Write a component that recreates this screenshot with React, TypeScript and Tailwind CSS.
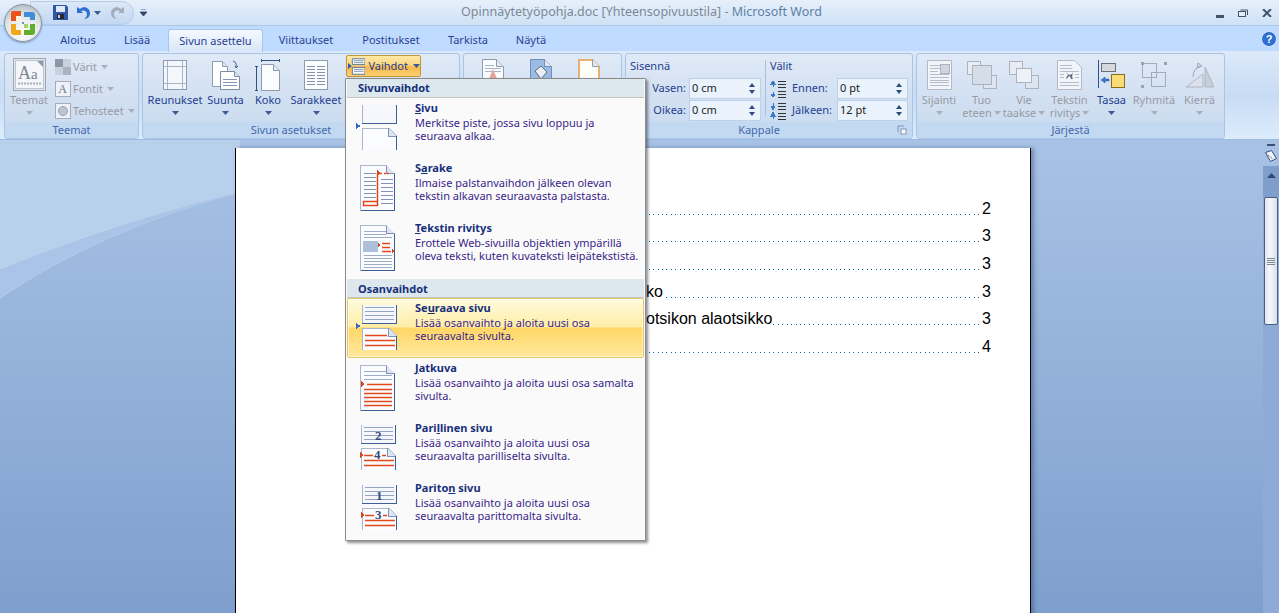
import type { ReactNode } from "react";

const tabs = [
  { label: "Aloitus", w: "w-[64px]" },
  { label: "Lisää", w: "w-[54px]" },
];
const tabsRight = [
  { label: "Viittaukset", w: "w-[86px]" },
  { label: "Postitukset", w: "w-[84px]" },
  { label: "Tarkista", w: "w-[70px]" },
  { label: "Näytä", w: "w-[56px]" },
];

const tocRows = [
  { text: "", page: "2" },
  { text: "", page: "3" },
  { text: "", page: "3" },
  { text: "ko", page: "3" },
  { text: "otsikon alaotsikko", page: "3" },
  { text: "", page: "4" },
];

function DownArrow({ off }: { off?: boolean }) {
  return (
    <svg width="7" height="4" viewBox="0 0 7 4" className="shrink-0">
      <path d="M0 0h7L3.5 4z" fill={off ? "#a9afb9" : "#3a5a92"} />
    </svg>
  );
}

function Group({ w, label, pad, children, launcher }: { w: string; label?: string; pad?: boolean; children: ReactNode; launcher?: boolean }) {
  return (
    <div className={`${w} h-[86px] flex flex-col rounded-[3px] border border-[#a9c5e6] overflow-hidden bg-gradient-to-b from-[#e0eaf7] via-[#d2e0f2] to-[#c9daef]`}>
      <div className="flex-1 flex min-h-0">{children}</div>
      <div className={`relative h-[16px] bg-[#c3d9f2] text-center text-[11px] leading-[15px] text-[#4668ad] ${pad ? "pr-[20px]" : ""}`}>
        {label}
        {launcher && (
          <svg width="10" height="10" viewBox="0 0 10 10" className="absolute right-[5px] top-[3px]">
            <path d="M1 1h6M1 1v6" stroke="#7f95b5" fill="none" />
            <rect x="4" y="4" width="5" height="5" fill="#fff" stroke="#7f95b5" />
          </svg>
        )}
      </div>
    </div>
  );
}

function BigBtn({ w, lines, icon, off, inlineArrow }: { w: string; lines: string[]; icon: ReactNode; off?: boolean; inlineArrow?: boolean }) {
  return (
    <div className={`${w} pt-[4px] flex flex-col items-center text-[11px] leading-[13px] ${off ? "text-[#989aa3]" : "text-[#24408f]"}`}>
      <div className="h-[33px] flex items-center justify-center">{icon}</div>
      <div className="mt-[2px] whitespace-nowrap">{lines[0]}</div>
      {inlineArrow ? (
        <div className="whitespace-nowrap flex items-center gap-[2px]">
          {lines[1]}
          <DownArrow off={off} />
        </div>
      ) : (
        <div className="h-[13px] flex items-center">
          <DownArrow off={off} />
        </div>
      )}
    </div>
  );
}

function SmallBtn({ icon, label }: { icon: ReactNode; label: string }) {
  return (
    <div className="h-[22px] flex items-center text-[11px] text-[#989aa3]">
      <div className="w-[19px] flex justify-center">{icon}</div>
      <span className="ml-[1px] whitespace-nowrap">{label}</span>
      <span className="ml-[4px]">
        <DownArrow off />
      </span>
    </div>
  );
}

function Spin({ value, w }: { value: string; w: string }) {
  return (
    <div className={`${w} h-[21px] bg-[#eaf2fc] border border-[#bcd0e8] flex items-center justify-between pl-[2px] pr-[5px] text-[11px] text-[#222]`}>
      <span>{value}</span>
      <span className="flex flex-col gap-[3px]">
        <svg width="6" height="4" viewBox="0 0 6 4"><path d="M0 4h6L3 0z" fill="#2c4a7c" /></svg>
        <svg width="6" height="4" viewBox="0 0 6 4"><path d="M0 0h6L3 4z" fill="#2c4a7c" /></svg>
      </span>
    </div>
  );
}

function SpaceIcon({ down }: { down?: boolean }) {
  return (
    <svg width="17" height="18" viewBox="0 0 17 18" shapeRendering="crispEdges">
      <path d="M8 1h8M8 4h8M8 7h8" stroke="#333" strokeWidth="1" />
      <path d="M8 11h8M8 14h8M8 17h8" stroke="#333" strokeWidth="1" />
      {down ? (
        <path d="M3 1v4M1 4h4L3 8zM3 17v-4M1 14h4L3 10z" fill="#3c78c8" stroke="#3c78c8" />
      ) : (
        <path d="M3 7V4M1 4h4L3 1zM3 12v3M1 14h4L3 17z" fill="#3c78c8" stroke="#3c78c8" />
      )}
    </svg>
  );
}

/* ribbon icons */
function TeematIcon() {
  return (
    <svg width="33" height="33" viewBox="0 0 33 33">
      <rect x="0.5" y="0.5" width="32" height="32" fill="#dfe6f0" stroke="#a4a8ae" />
      <rect x="2.5" y="2.5" width="28" height="28" fill="#f4f6fa" stroke="#bfc5cf" />
      <path d="M24 3h6v6z" fill="#8f98a8" />
      <text x="5" y="21" fontSize="18" fontFamily="Liberation Serif" fill="#7f8794">A</text>
      <text x="18" y="21" fontSize="15" fontFamily="Liberation Serif" fill="#7f8794">a</text>
      <path d="M5 25.500h23" stroke="#a9afba" strokeWidth="2" strokeDasharray="2 1" />
    </svg>
  );
}

function ReunuksetIcon() {
  return (
    <svg width="26" height="32" viewBox="0 0 26 32">
      <rect x="1.5" y="1.5" width="23" height="29" fill="#f3f6fb" stroke="#8e9cb2" />
      <path d="M5.5 2v28M20.5 2v28M2 7.5h22M2 24.5h22" stroke="#a8b4c6" />
    </svg>
  );
}

function SuuntaIcon() {
  return (
    <svg width="30" height="32" viewBox="0 0 30 32">
      <path d="M1.5 2.5h10l5 5v20h-15z" fill="#fff" stroke="#8e9cb2" />
      <path d="M11.5 2.5v5h5" fill="#dfe6f0" stroke="#8e9cb2" />
      <path d="M9.5 12.5h14l5 5v13h-19z" fill="#fff" stroke="#7d8ca5" />
      <path d="M23.5 12.5v5h5" fill="#dfe6f0" stroke="#7d8ca5" />
      <path d="M12 20.500h14M12 23.500h14M12 26.500h14" stroke="#8597b5" />
      <path d="M22 2q4 1 3 6M24 7l1 2 2-2" stroke="#3a5a92" fill="none" />
    </svg>
  );
}

function KokoIcon() {
  return (
    <svg width="26" height="32" viewBox="0 0 26 32">
      <path d="M6 1.500h19M6.500 0v3M24.500 0v3" stroke="#35507f" />
      <path d="M1.500 7v25M0 7.500h3M0 31.500h3" stroke="#35507f" />
      <path d="M6.5 5.5h12l6 6v20h-18z" fill="#fbfcfe" stroke="#8e9cb2" />
      <path d="M18.5 5.5v6h6" fill="#dfe6f0" stroke="#8e9cb2" />
    </svg>
  );
}

function SarakkeetIcon() {
  return (
    <svg width="26" height="32" viewBox="0 0 26 32">
      <rect x="1.5" y="1.5" width="23" height="29" fill="#fbfcfe" stroke="#8e9cb2" />
      <path d="M4 7.500h8M14 7.500h8M4 10.500h8M14 10.500h8M4 13.500h8M14 13.500h8M4 16.500h8M14 16.500h8M4 19.500h8M14 19.500h8M4 22.500h8M14 22.500h8M4 25.500h8M14 25.500h8" stroke="#8493ab" />
    </svg>
  );
}

function VaihdotIcon() {
  return (
    <svg width="18" height="17" viewBox="0 0 18 17">
      <path d="M4.5 0.5h13v6h-13z" fill="#fff" stroke="#5f7697" />
      <path d="M4.5 9.5h13v7h-13z" fill="#fff" stroke="#5f7697" />
      <path d="M6 2.500h10M6 4.500h10M6 11.500h10M6 13.500h10" stroke="#7c90ad" />
      <path d="M0 5l4 3-4 3z" fill="#2e5fb5" />
    </svg>
  );
}

function SquaresIcon({ back }: { back?: boolean }) {
  return (
    <svg width="32" height="30" viewBox="0 0 32 30">
      <rect x="1.5" y="1.5" width="13" height="13" fill="#e9edf3" stroke="#aab3c0" />
      <rect x="17.5" y="15.5" width="13" height="13" fill="#dfe5ee" stroke="#aab3c0" />
      {back ? (
        <rect x="8.5" y="8.5" width="15" height="14" fill="#eef1f6" stroke="#aab3c0" />
      ) : (
        <rect x="6.5" y="5.5" width="19" height="19" fill="#d5dde9" stroke="#aab3c0" />
      )}
    </svg>
  );
}

function DisabledPage({ kind }: { kind: "pic" | "dog" }) {
  return (
    <svg width="25" height="30" viewBox="0 0 25 30">
      <path d={kind === "pic" ? "M.5.5h24v29H.5z" : "M.5.5h17l7 7v22H.5z"} fill="#f1f4f8" stroke="#b3bac5" />
      <path d="M3 5.500h12M3 8.500h12M3 22.500h19M3 25.500h19" stroke="#b7bdc8" />
      {kind === "pic" ? (
        <>
          <rect x="13.5" y="4.500" width="9" height="9" fill="#cfd6e1" stroke="#aab3c0" />
          <path d="M3 11.500h8M3 14.500h19M3 17.500h19M3 20.500h19" stroke="#b7bdc8" />
        </>
      ) : (
        <>
          <path d="M3 11.500h19M3 14.500h4M18 14.500h4M3 17.500h4M18 17.500h4" stroke="#b7bdc8" />
          <path d="M9 12l3 3 3-1 1-2-1 5 1 2h-2l-1-3-2 1-1 2-1-1 2-3z" fill="#5f6a7b" />
        </>
      )}
    </svg>
  );
}

function TasaaIcon() {
  return (
    <svg width="28" height="30" viewBox="0 0 28 30">
      <path d="M0.5 0v28" stroke="#2b4f96" />
      <rect x="3.5" y="3.5" width="14" height="8" fill="#d5d9df" stroke="#6f6f6f" />
      <rect x="13.5" y="14.5" width="13" height="13" fill="#f9dc73" stroke="#8a6d1c" />
      <path d="M3 20l4-3v2h4v2H7v2z" fill="#3a78d0" stroke="#2b4f96" strokeWidth="0.5" />
    </svg>
  );
}

function RyhmitaIcon() {
  return (
    <svg width="26" height="26" viewBox="0 0 26 26">
      <rect x="1.5" y="1.5" width="14" height="14" fill="none" stroke="#a2abb8" />
      <rect x="10.5" y="10.5" width="14" height="14" fill="none" stroke="#a2abb8" />
      <path d="M0 0h3v3H0zM23 0h3v3h-3zM0 23h3v3H0z" fill="#98a2b0" />
    </svg>
  );
}

function KierraIcon() {
  return (
    <svg width="30" height="28" viewBox="0 0 30 28">
      <path d="M1 26l17-13v13z" fill="#dbe1ea" stroke="#aeb6c2" />
      <path d="M20 26V6l9 20z" fill="#c6ced9" stroke="#aeb6c2" />
      <path d="M8 16q0-8 7-11M13 2l4 3-5 2z" fill="none" stroke="#9aa4b2" />
    </svg>
  );
}

/* menu icons, 44 x 56, drawn so that x=0 is the small blue marker */
function Marker() {
  return <path d="M0 25l5 3-5 3z" fill="#3b66c8" />;
}

// red lines stay slightly wider than a pixel so the colour still reads at this size
function RedLines({ d }: { d: string }) {
  return <path d={d} stroke="#e2481a" strokeWidth="1.5" fill="none" shapeRendering="geometricPrecision" />;
}

function TopPage({ x = 6, lined, n }: { x?: number; lined?: boolean; n?: string }) {
  return (
    <g>
      <path d={`M${x}.5 7v18h34V7`} fill="#f5f7fd" stroke="#3d5f95" />
      <path d={`M${x}.5 7v18`} stroke="#aab6c9" />
      {lined && <path d={`M${x + 3} 9h29M${x + 3} 13h29M${x + 3} 17h29M${x + 3} 21h29`} stroke="#93a4c0" />}
      {n && (
        <text x={x + 14} y="22" fontSize="13" fontWeight="bold" fontFamily="Liberation Serif" fill="#34497a">{n}</text>
      )}
    </g>
  );
}

function BottomPage({ x = 6, red, n }: { x?: number; red?: boolean; n?: string }) {
  return (
    <g>
      <path d={`M${x}.5 52V30h26l8 8v14`} fill="#fbfcff" stroke="#aab6c9" />
      <path d={`M${x + 26}.5 30v8h8`} fill="#dfe5f0" stroke="#7e93b5" />
      <path d={`M${x + 34}.5 38v14`} stroke="#3d5f95" />
      {red && <RedLines d={`M${x + 3} 37.500h22M${x + 3} 42.500h30M${x + 3} 47.500h30`} />}
      {n && <path d={`M${x - 1} 34l4 3-4 3z`} fill="#d9481c" />}
      {n && <rect x={x + 12} y="31" width="9" height="10" fill="#fbfcff" />}
      {n && (
        <text x={x + 13} y="41" fontSize="13" fontWeight="bold" fontFamily="Liberation Serif" fill="#34497a">{n}</text>
      )}
    </g>
  );
}

function FullPage({ children }: { children: ReactNode }) {
  return (
    <g>
      <path d="M4.5 52.5V7.5h26l8 8v37z" fill="#fbfcff" stroke="#aab6c9" />
      <path d="M30.5 7.5v8h8" fill="#dfe5f0" stroke="#7e93b5" />
      <path d="M38.5 16v36.5H5" fill="none" stroke="#3d5f95" />
      {children}
    </g>
  );
}

function MenuIcon({ kind }: { kind: string }) {
  return (
    <svg width="44" height="56" viewBox="0 0 44 56" className="block" shapeRendering="crispEdges">
      {kind === "sivu" && (<><TopPage /><BottomPage /><Marker /></>)}
      {kind === "sarake" && (
        <FullPage>
          <path d="M8 15h12M8 19h12M8 23h12M8 27h12M8 31h12M8 35h12M8 39h12M25 21h12M25 25h12M25 29h12M25 33h12M25 37h12M25 41h12M25 45h12" stroke="#7f93b3" />
          <RedLines d="M21.500 15V47.500H7.500V43.500H21.500M23 15.500h3M28 15.500h2M31 15.500h2" />
          <path d="M21 12l3 3-3 3z" fill="#d9481c" />
        </FullPage>
      )}
      {kind === "rivitys" && (
        <FullPage>
          <path d="M8 13h22M8 16h22M8 19h28M8 37h28M8 40h28M8 43h28M8 46h28M8 49h28" stroke="#9dadc6" />
          <rect x="7" y="23" width="15" height="11" fill="#aebfd9" />
          <RedLines d="M26 25.500h8M26 29.500h8M26 33.500h9" />
          <path d="M22 25l3 2-3 2zM36 31l3 2-3 2z" fill="#d9481c" />
        </FullPage>
      )}
      {kind === "seuraava" && (<><TopPage lined /><BottomPage red /><Marker /></>)}
      {kind === "jatkuva" && (
        <FullPage>
          <path d="M8 13h22M8 17h28M8 21h28" stroke="#9dadc6" />
          <RedLines d="M11 26.500h25M8 31.500h28M8 35.500h28M8 39.500h28M8 43.500h28M8 47.500h28" />
          <path d="M5 23l4 3-4 3z" fill="#d9481c" />
        </FullPage>
      )}
      {kind === "parillinen" && (<><TopPage x={5} lined n="2" /><BottomPage x={5} red n="4" /></>)}
      {kind === "pariton" && (<><TopPage x={6} lined n="1" /><BottomPage x={6} red n="3" /></>)}
    </svg>
  );
}

const breakItems = [
  { icon: "sivu", pre: "", u: "S", post: "ivu", lines: ["Merkitse piste, jossa sivu loppuu ja", "seuraava alkaa."] },
  { icon: "sarake", pre: "S", u: "a", post: "rake", lines: ["Ilmaise palstanvaihdon jälkeen olevan", "tekstin alkavan seuraavasta palstasta."] },
  { icon: "rivitys", pre: "", u: "T", post: "ekstin rivitys", lines: ["Erottele Web-sivuilla objektien ympärillä", "oleva teksti, kuten kuvateksti leipätekstistä."] },
];
const sectionItems = [
  { icon: "seuraava", pre: "Se", u: "u", post: "raava sivu", lines: ["Lisää osanvaihto ja aloita uusi osa", "seuraavalta sivulta."], active: true },
  { icon: "jatkuva", pre: "", u: "J", post: "atkuva", lines: ["Lisää osanvaihto ja aloita uusi osa samalta", "sivulta."] },
  { icon: "parillinen", pre: "Pari", u: "l", post: "linen sivu", lines: ["Lisää osanvaihto ja aloita uusi osa", "seuraavalta parilliselta sivulta."] },
  { icon: "pariton", pre: "Parito", u: "n", post: " sivu", lines: ["Lisää osanvaihto ja aloita uusi osa", "seuraavalta parittomalta sivulta."] },
];

type Item = { icon: string; pre: string; u: string; post: string; lines: string[]; active?: boolean };

function MenuItem({ item }: { item: Item }) {
  return (
    <div
      className={`h-[60px] flex rounded-[2px] border ${
        item.active
          ? "border-[#e6c66a] shadow-[inset_0_0_0_1px_rgba(255,255,255,0.5)] bg-[linear-gradient(#fffbdc_0%,#ffeda8_48%,#ffd766_50%,#ffe79c_100%)]"
          : "border-transparent"
      }`}
    >
      <div className="w-[67px] pl-[8px] -mt-px shrink-0">
        <MenuIcon kind={item.icon} />
      </div>
      <div className="pt-[2px] text-[11px] leading-[13px]">
        <div className="font-bold text-[#17307a] h-[15px]">
          {item.pre}
          <u>{item.u}</u>
          {item.post}
        </div>
        {item.lines.map((l) => (
          <div key={l} className="text-[#3b1f8a] whitespace-nowrap">{l}</div>
        ))}
      </div>
    </div>
  );
}

function MenuHead({ label, low }: { label: string; low?: boolean }) {
  return (
    <div className={`h-[19px] bg-[#dde7ee] border-b border-[#c5c5c5] pl-[11px] text-[11px] font-bold text-[#17307a] ${low ? "leading-[20px]" : "leading-[18px]"}`}>
      {label}
    </div>
  );
}

export default function App() {
  return (
    <div className="relative w-[1279px] h-[613px] overflow-hidden flex flex-col font-['Noto_Sans','DejaVu_Sans',sans-serif] bg-[#bfdbff]">
      {/* title bar */}
      <div className="h-[26px] shrink-0 border-b border-[#a9c8ea] bg-gradient-to-b from-[#e6f0fb] to-[#cfe1f6] flex items-center">
        <div className="ml-[30px] w-[104px] h-[24px] rounded-r-full bg-gradient-to-b from-[#dbe8f8] to-[#c3d8f2] border border-[#b4cdea] flex items-center pl-[22px] gap-[8px]">
          <svg width="15" height="15" viewBox="0 0 15 15">
            <path d="M0 0h13l2 2v13H0z" fill="#3056a8" />
            <rect x="3" y="1" width="9" height="6" fill="#dfe8f6" />
            <rect x="4" y="9" width="7" height="5" fill="#27282c" />
            <rect x="5" y="10" width="2" height="3" fill="#c9d4e6" />
          </svg>
          <svg width="15" height="15" viewBox="0 0 15 15">
            <path d="M1 2v6h6L5 6c3-1.500 6 0 6 3 0 2-1 4-3 5 4 0 6-3 6-6C14 3 8 0 4 4z" fill="#2c6fd0" />
          </svg>
          <span className="-ml-[5px]"><DownArrow /></span>
          <svg width="15" height="15" viewBox="0 0 15 15" className="ml-[1px]">
            <path d="M14 2v6H8l2-2C7 4.500 4 6 4 9c0 2 1 4 3 5-4 0-6-3-6-6C1 3 7 0 11 4z" fill="#a3aebd" />
          </svg>
        </div>
        <svg width="7" height="7" viewBox="0 0 7 7" className="ml-[6px]">
          <path d="M1 0h5M0 3h7L3.500 7z" stroke="#30466e" strokeWidth="0.8" fill="#30466e" />
        </svg>
        <div className="ml-[314px] w-[362px] text-[12.500px] whitespace-nowrap text-[#7d8896]">
          Opinnäytetyöpohja.doc [Yhteensopivuustila] - <span className="text-[#5e7fa5]">Microsoft Word</span>
        </div>
        <div className="ml-auto flex items-center gap-[14px] pr-[7px]">
          <svg width="8" height="3" viewBox="0 0 8 3" className="mt-[8px]"><rect width="8" height="3" fill="#43536b" /></svg>
          <svg width="10" height="8" viewBox="0 0 10 8">
            <rect x="0.500" y="2.500" width="7" height="5" fill="#e8eef7" stroke="#43536b" />
            <path d="M2.500 1h7v5" stroke="#43536b" fill="none" />
          </svg>
          <svg width="10" height="8" viewBox="0 0 10 8"><path d="M1 0l8 8M9 0L1 8" stroke="#43536b" strokeWidth="2" /></svg>
        </div>
      </div>

      {/* tabs */}
      <div className="h-[25px] shrink-0 flex items-end pl-[46px] text-[11px] text-[#2b3f93] bg-[#bfdbff] relative">
        {tabs.map((t) => (
          <div key={t.label} className={`${t.w} h-[23px] text-center leading-[23px]`}>{t.label}</div>
        ))}
        <div className="ml-[4px] w-[95px] h-[23px] text-center leading-[22px] rounded-t-[3px] border border-b-0 border-[#a6c6ea] bg-gradient-to-b from-[#f5f9ff] to-[#d8e6f7] -mb-px z-10">
          Sivun asettelu
        </div>
        {tabsRight.map((t) => (
          <div key={t.label} className={`${t.w} h-[23px] text-center leading-[23px]`}>{t.label}</div>
        ))}
        <svg width="16" height="16" viewBox="0 0 16 16" className="absolute right-[2px] top-[5px]">
          <circle cx="8" cy="8" r="7.500" fill="#2d6fd2" stroke="#dbe8fa" />
          <text x="8" y="12" textAnchor="middle" fontSize="11" fontWeight="bold" fontFamily="Liberation Sans" fill="#fff">?</text>
        </svg>
      </div>

      {/* ribbon */}
      <div className="h-[89px] shrink-0 pl-[4px] pt-[2px] flex gap-[3px] bg-gradient-to-b from-[#dce9f9] via-[#c8dcf4] to-[#dcecfc] border-b border-[#9fbde0]">
        <Group w="w-[135px]" label="Teemat">
          <div className="pl-[3px]">
            <BigBtn w="w-[42px]" lines={["Teemat"]} icon={<TeematIcon />} off />
          </div>
          <div className="pl-[3px] pt-[2px] flex flex-col">
            <SmallBtn label="Värit" icon={
              <svg width="16" height="16" viewBox="0 0 16 16">
                <rect width="16" height="16" fill="#c8d0dc" />
                <rect width="8" height="8" fill="#8b96a6" />
                <rect x="8" y="8" width="8" height="8" fill="#a9b3c1" />
              </svg>
            } />
            <SmallBtn label="Fontit" icon={
              <div className="w-[16px] h-[16px] border border-[#a6adb9] bg-[#eef2f8] text-[12px] leading-[14px] text-center text-[#6d7685] font-['Liberation_Serif',serif]">A</div>
            } />
            <SmallBtn label="Tehosteet" icon={
              <div className="w-[16px] h-[16px] border border-[#a6adb9] bg-[#eef2f8] flex items-center justify-center">
                <div className="w-[10px] h-[10px] rounded-full bg-[#bcc5d2] border border-[#98a2b0]" />
              </div>
            } />
          </div>
        </Group>

        <Group w="w-[318px]" label="Sivun asetukset" pad>
          <div className="pl-[3px] flex">
            <BigBtn w="w-[58px]" lines={["Reunukset"]} icon={<ReunuksetIcon />} />
            <BigBtn w="w-[43px]" lines={["Suunta"]} icon={<SuuntaIcon />} />
            <BigBtn w="w-[42px]" lines={["Koko"]} icon={<KokoIcon />} />
            <BigBtn w="w-[54px]" lines={["Sarakkeet"]} icon={<SarakkeetIcon />} />
          </div>
          <div className="ml-[3px] mt-[1px] w-[75px] h-[22px] rounded-[2px] border border-[#c2953f] bg-[linear-gradient(#fde9a8,#fbd77e_45%,#f8b850_55%,#fbcf6c)] flex items-center pl-[1px] text-[11px] text-[#24408f]">
            <VaihdotIcon />
            <span className="ml-[3px]">Vaihdot</span>
            <span className="ml-[5px]"><DownArrow /></span>
          </div>
        </Group>

        <Group w="w-[159px]">
          <div className="flex pt-[5px] pl-[18px] gap-[26px] items-start">
            <svg width="22" height="26" viewBox="0 0 22 26">
              <path d="M.5.500h14l7 7v18H.5z" fill="#fbfcff" stroke="#8e9cb2" />
              <path d="M14.500.500v7h7" fill="#e3e8f0" stroke="#8e9cb2" />
              <path d="M3 6.500h9M3 9.500h16M3 12.500h16" stroke="#a9b5c8" />
              <path d="M6 22l5-12 5 12z" fill="#e5a49a" />
            </svg>
            <svg width="22" height="26" viewBox="0 0 22 26">
              <path d="M.5.500h14l7 7v18H.5z" fill="#9bbbe3" stroke="#6f8fbc" />
              <path d="M14.500.500v7h7" fill="#e3e8f0" stroke="#6f8fbc" />
              <path d="M5 12l6-5 6 6-6 7z" fill="#e9edf3" stroke="#5c6a7d" />
            </svg>
            <svg width="22" height="26" viewBox="0 0 22 26">
              <path d="M1 1h13.500l6.500 6.500V26H1z" fill="#fffdf8" stroke="#e79a49" strokeWidth="1.500" />
              <path d="M14.500 .500v7h7" fill="#e3e8f0" stroke="#8e9cb2" />
            </svg>
          </div>
        </Group>

        <Group w="w-[288px]" label="Kappale" pad launcher>
          <div className="w-[140px] border-r border-[#a9bfdc] h-[56px] mt-[6px] pl-[4px] flex flex-col text-[11px] text-[#24408f]">
            <div className="h-[12px] leading-[12px]">Sisennä</div>
            <div className="mt-[6px] flex items-center justify-end gap-[3px] pr-[4px]">
              <span>Vasen:</span>
              <Spin value="0 cm" w="w-[72px]" />
            </div>
            <div className="mt-px flex items-center justify-end gap-[3px] pr-[4px]">
              <span>Oikea:</span>
              <Spin value="0 cm" w="w-[72px]" />
            </div>
          </div>
          <div className="flex-1 pl-[4px] mt-[6px] flex flex-col text-[11px] text-[#24408f]">
            <div className="h-[12px] leading-[12px]">Välit</div>
            <div className="mt-[6px] flex items-center">
              <SpaceIcon />
              <span className="ml-[5px] w-[45px]">Ennen:</span>
              <Spin value="0 pt" w="w-[71px]" />
            </div>
            <div className="mt-px flex items-center">
              <SpaceIcon down />
              <span className="ml-[5px] w-[45px]">Jälkeen:</span>
              <Spin value="12 pt" w="w-[71px]" />
            </div>
          </div>
        </Group>

        <Group w="w-[309px]" label="Järjestä">
          <BigBtn w="w-[44px]" lines={["Sijainti"]} icon={<DisabledPage kind="pic" />} off />
          <BigBtn w="w-[41px]" lines={["Tuo", "eteen"]} icon={<SquaresIcon />} off inlineArrow />
          <BigBtn w="w-[44px]" lines={["Vie", "taakse"]} icon={<SquaresIcon back />} off inlineArrow />
          <BigBtn w="w-[47px]" lines={["Tekstin", "rivitys"]} icon={<DisabledPage kind="dog" />} off inlineArrow />
          <BigBtn w="w-[37px]" lines={["Tasaa"]} icon={<TasaaIcon />} />
          <BigBtn w="w-[48px]" lines={["Ryhmitä"]} icon={<RyhmitaIcon />} off />
          <BigBtn w="w-[43px]" lines={["Kierrä"]} icon={<KierraIcon />} off />
        </Group>
      </div>

      {/* document */}
      <div className="relative flex-1 min-h-0 flex bg-gradient-to-b from-[#a8c2e5] to-[#7e9fcd]">
        <svg className="absolute left-0 top-0" width="240" height="200" viewBox="0 0 240 200">
          <path d="M0 0H240V52Q110 85 0 130Z" fill="#b9d0ed" />
          <path d="M0 130Q110 85 240 52Q100 90 0 158Z" fill="#a9c4e7" />
          <path d="M0 158Q100 90 240 52" stroke="#b4cbea" fill="none" />
        </svg>
        <div className="relative ml-[235px] mt-[8px] w-[796px] h-[600px] bg-white border-x border-black shadow-[3px_0_4px_rgba(50,70,110,0.45)] pt-[47px] pl-[410px] pr-[39px] text-[16px] text-black font-['Liberation_Sans',sans-serif]">
          {tocRows.map((r, i) => (
            <div key={i} className="h-[27.600px] flex items-center">
              {r.text && <span className="whitespace-nowrap">{r.text}</span>}
              <div className="flex-1 h-px mt-[11px] bg-[repeating-linear-gradient(270deg,#00649f_0,#00649f_1px,transparent_1px,transparent_4.450px)]" />
              <span className="ml-[3px]">{r.page}</span>
            </div>
          ))}
        </div>
        <div className="ml-auto w-[16px] relative flex flex-col">
          <div className="h-[26px] flex flex-col items-center">
            <div className="w-[8px] h-[2px] bg-[#39507d] mt-[4px]" />
            <svg width="12" height="12" viewBox="0 0 12 12" className="mt-[4px]">
              <path d="M.5 2.500l6-2 5 8-6 3z" fill="#f1f4f8" stroke="#39507d" />
              <path d="M3 5l5 4" stroke="#39507d" strokeDasharray="1 1" />
            </svg>
          </div>
          <div className="flex-1 bg-[#8dabd6] flex flex-col">
            <div className="h-[31px] bg-[#7f9ecb] flex justify-center pt-[7px]">
              <svg width="9" height="5" viewBox="0 0 9 5"><path d="M0 5h9L4.500 0z" fill="#33496f" /></svg>
            </div>
            <div className="h-[128px] mx-px border border-[#4b5f86] rounded-[2px] bg-[linear-gradient(90deg,#dfe6ef,#f6f8fb_40%,#d7dfeb)] flex flex-col items-center justify-center gap-px">
              <div className="w-[8px] h-px bg-[#7d8796]" />
              <div className="w-[8px] h-px bg-[#7d8796]" />
              <div className="w-[8px] h-px bg-[#7d8796]" />
              <div className="w-[8px] h-px bg-[#7d8796]" />
            </div>
          </div>
        </div>
      </div>

      {/* Vaihdot dropdown */}
      <div className="absolute left-[345px] top-[78px] w-[301px] h-[463px] bg-[#fafafa] border border-[#8b8b8b] rounded-[1px] shadow-[2px_2px_3px_rgba(50,50,60,0.55)] px-px">
        <MenuHead label="Sivunvaihdot" />
        {breakItems.map((it) => (
          <MenuItem key={it.icon} item={it} />
        ))}
        <div className="h-px" />
        <MenuHead label="Osanvaihdot" low />
        {sectionItems.map((it) => (
          <MenuItem key={it.icon} item={it} />
        ))}
      </div>

      {/* office button */}
      <div className="absolute left-[4px] top-[4px] w-[38px] h-[38px] rounded-full border border-[#8b949e] bg-[radial-gradient(circle_at_50%_75%,#ffffff,#dfe5ea_55%,#9fa8b1_100%)] shadow-[0_1px_2px_rgba(60,80,110,0.5)] flex items-center justify-center">
        <svg width="28" height="28" viewBox="0 0 28 28">
          <path d="M2 4q0-2 2-2h8v5H7v5H2z" fill="#e8541c" />
          <path d="M7 7h5v5H7z" fill="#fff2d8" />
          <path d="M15 3h8q3 0 3 3v5h-5V8h-6z" fill="#3f8fd8" />
          <path d="M2 15h5v6h5v5H5q-3 0-3-3z" fill="#f0a818" />
          <path d="M21 15h5v8q0 3-3 3h-8v-5h6z" fill="#62ae2c" />
          <path d="M15 15h4v4h-4z" fill="#a5d26c" />
          <path d="M13 13h2v2h-2z" fill="#6f8fb5" />
        </svg>
      </div>
    </div>
  );
}
